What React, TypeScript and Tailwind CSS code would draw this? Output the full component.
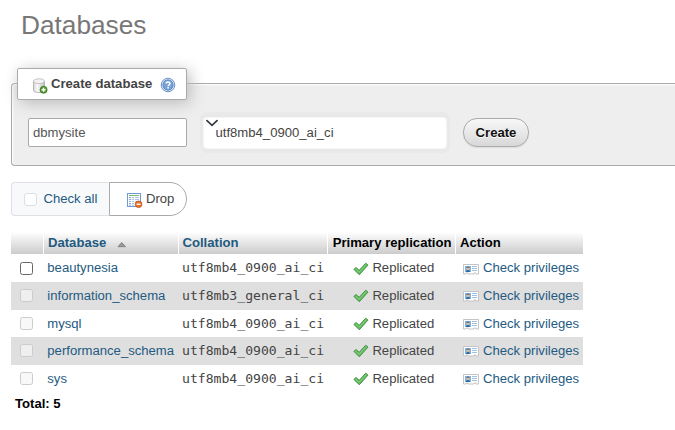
import React from "react";

type Row = { name: string; collation: string; enabled?: boolean; height: string; shade: string; box: string; icon: string };

const rows: Row[] = [
  { name: "beautynesia", collation: "utf8mb4_0900_ai_ci", enabled: true, height: "h-[28px]", shade: "bg-white", box: "mb-0", icon: "mt-[2px]" },
  { name: "information_schema", collation: "utf8mb3_general_ci", height: "h-[28px]", shade: "bg-[#dfdfdf]", box: "mb-[2px]", icon: "mt-0" },
  { name: "mysql", collation: "utf8mb4_0900_ai_ci", height: "h-[27px]", shade: "bg-white", box: "mb-0", icon: "mt-0" },
  { name: "performance_schema", collation: "utf8mb4_0900_ai_ci", height: "h-[28px]", shade: "bg-[#dfdfdf]", box: "mb-[2px]", icon: "mt-0" },
  { name: "sys", collation: "utf8mb4_0900_ai_ci", height: "h-[28px]", shade: "bg-white", box: "mb-[2px]", icon: "mt-0" },
];

const columns = "grid grid-cols-[32px_134px_148px_127px_127px] gap-x-px w-[572px]";
const headCell = "flex items-center bg-linear-to-b from-white to-[#cccccc]";

function DatabaseAddIcon() {
  return (
    <svg width="16" height="16" viewBox="0 0 16 16" className="shrink-0">
      <defs>
        <linearGradient id="cylinder">
          <stop offset="0" stopColor="#d4d4d4" />
          <stop offset=".35" stopColor="#fafafa" />
          <stop offset="1" stopColor="#bdbdbd" />
        </linearGradient>
      </defs>
      <path d="M1.5 3.2v9.2c0 1.3 2.2 2.1 5.5 2.1s5.5-.8 5.5-2.1V3.2z" fill="url(#cylinder)" stroke="#aaa" strokeWidth=".8" />
      <ellipse cx="7" cy="3.2" rx="5.5" ry="2.4" fill="#f3f3f3" stroke="#b8b8b8" strokeWidth=".8" />
      <circle cx="11.6" cy="11.8" r="3.5" fill="#58a032" stroke="#34731d" strokeWidth=".8" />
      <path d="M11.6 9.8v4M9.6 11.8h4" stroke="#fff" strokeWidth="1.4" />
    </svg>
  );
}

function HelpIcon() {
  return (
    <svg width="16" height="16" viewBox="0 0 16 16" className="shrink-0">
      <circle cx="8" cy="8" r="6.8" fill="#dce8f6" stroke="#6289be" strokeWidth=".9" />
      <circle cx="8" cy="8" r="5.2" fill="#77a1d8" stroke="#4d7dbc" strokeWidth=".7" />
      <path d="M6.1 6.6C6.1 4.4 10 4.4 10 6.5c0 1.3-1.9 1.3-1.9 2.7" fill="none" stroke="#fff" strokeWidth="1.5" />
      <rect x="7.3" y="10.1" width="1.6" height="1.5" fill="#fff" />
    </svg>
  );
}

function DropIcon() {
  return (
    <svg width="16" height="16" viewBox="0 0 16 16" className="shrink-0">
      <rect x=".5" y="1.5" width="13" height="13" fill="#f9fcff" stroke="#7098d1" />
      <path d="M2 3.5h10" stroke="#7cbd71" />
      <path d="M2 5.5h2M2 7.5h2M2 9.5h2M2 11.5h2M2 13.2h2" stroke="#7da3d6" strokeWidth=".9" />
      <path d="M5 5.5h2M8 5.5h4M5 7.5h2M8 7.5h4M5 9.5h2M8 9.5h4M5 11.5h2M5 13.2h2" stroke="#a9bdd9" strokeWidth=".9" />
      <circle cx="11.6" cy="12.3" r="3.3" fill="#ed7329" stroke="#b94611" strokeWidth=".7" />
      <path d="M9.7 12.3h3.8" stroke="#fff" strokeWidth="1.4" />
    </svg>
  );
}

function TickIcon() {
  return (
    <svg width="16" height="16" viewBox="0 0 16 16" className="shrink-0">
      <path d="M.9 8.4 3 6.5l3.2 2.8 6.5-7.1 2.3 1.9-8.7 9.7z" fill="#65bb60" stroke="#3c8c3d" strokeWidth=".9" strokeLinejoin="round" />
      <path d="m2.4 8 3.8 3.1 6.9-7.6" fill="none" stroke="#8dd585" strokeWidth=".8" />
    </svg>
  );
}

function PrivilegesIcon() {
  return (
    <svg width="16" height="16" viewBox="0 0 16 16" className="shrink-0">
      <path d="M.5 3.5h15v9.5H13v-1h-2v1H5v-1H3v1H.5z" fill="#fff" stroke="#c4c4c4" />
      <rect x="2" y="5" width="6" height="6" fill="#72b5f4" />
      <path d="M3 11c0-1.6 1-2 2-2s2 .4 2 2z" fill="#3d6795" />
      <circle cx="5" cy="7.6" r="1.5" fill="#efb784" />
      <path d="M3.4 7.1c0-2 3.2-2 3.2 0L5 6.6z" fill="#815532" />
      <path d="M9 5.5h5M9 7.5h5M9 9.5h5" stroke="#a2bfdd" />
    </svg>
  );
}

export default function App() {
  return (
    <main className="h-[430px] w-[675px] overflow-hidden bg-white font-['Liberation_Sans',Arial,sans-serif] text-[13.12px] leading-[20px] text-[#444]">
      <h1 className="h-[83px] pt-[9px] pl-[21px] text-[26.24px] leading-[32px] text-[#777]">Databases</h1>

      <section className="h-[83px] rounded-l-[4px] border border-r-0 border-[#aaa] bg-[#eee] pl-[5px] ml-[11px] shadow-[inset_1px_1px_2px_#fff]">
        <div className="-mt-[16px] flex h-[32px] w-[170px] items-center rounded-[2px] border border-[#aaa] bg-white pl-[14px] shadow-[3px_3px_15px_#bbb]">
          <span className="mt-[3px]"><DatabaseAddIcon /></span>
          <span className="ml-[3px] w-[107px] whitespace-nowrap font-bold">Create database</span>
          <span className="ml-[2px] mt-[2px]"><HelpIcon /></span>
        </div>
        <form className="flex pt-[12px] pl-[11px]" onSubmit={(e) => e.preventDefault()}>
          <input aria-label="Database name" defaultValue="dbmysite" className="mt-[6px] h-[29px] w-[159px] rounded-[2px] border border-[#aaa] bg-white px-[4px] text-[#555] outline-none" />
          <div className="ml-[13px] h-[41px] w-[250px] rounded-[7px] bg-[#e9e9e9] px-[3px] pt-[5px]">
            <div className="relative h-[32px] w-[244px] rounded-[4px] bg-white pt-[6px] pl-[12.5px] shadow-[inset_0_0_2px_#ddd]">
              <svg className="absolute top-[1px] left-[2px]" width="13" height="10" viewBox="0 0 13 10">
                <path d="m2 2.7 5 4.6 5-4.6" fill="none" stroke="#343a40" strokeWidth="1.7" strokeLinecap="round" />
              </svg>
              utf8mb4_0900_ai_ci
            </div>
          </div>
          <button className="mt-[6px] ml-[13px] h-[29px] w-[66px] rounded-[14px] border border-[#aaa] bg-linear-to-b from-[#f8f8f8] to-[#d8d8d8] font-bold text-[#111] shadow-[0_1px_1px_#ddd] [text-shadow:0_1px_0_#fff]">Create</button>
        </form>
      </section>

      <div className="mt-[16px] ml-[11px] flex h-[34px]">
        <label className="flex w-[98px] items-center rounded-l-[4px] border border-r-0 border-[#dee2e6] bg-[#f8f9fa] pl-[12px] text-[#235a81]">
          <input type="checkbox" disabled className="mr-[6.5px] h-[13px] w-[13px] appearance-none rounded-[3px] border border-[#dce0e4] bg-white" />
          Check all
        </label>
        <button className="flex w-[78px] items-center rounded-r-[17px] border border-[#aaa] bg-white pl-[17px]">
          <span className="mt-[2px]"><DropIcon /></span><span className="ml-[3px]">Drop</span>
        </button>
      </div>

      <div className="mt-[16px] ml-[11px] w-[572px]">
        <div className={`${columns} h-[22px] font-bold text-black`}>
          <div className={headCell} />
          <div className={`${headCell} pl-[4px] text-[#235a81]`}>
            Database
            <svg className="mt-[3px] ml-[11px]" width="10" height="7" viewBox="0 0 10 7"><path d="M1 5.7 4.7 1.5l3.8 4.2z" fill="#999" stroke="#777" strokeWidth=".8" /></svg>
          </div>
          <div className={`${headCell} pl-[3.5px] text-[#235a81]`}>Collation</div>
          <div className={`${headCell} pl-[4.7px] whitespace-nowrap`}>Primary replication</div>
          <div className={`${headCell} pl-[4px]`}>Action</div>
        </div>
        {rows.map((row) => (
          <div key={row.name} className={`${columns} ${row.height} ${row.shade} items-center`}>
            <input type="checkbox" aria-label={row.name} disabled={!row.enabled} className={`ml-[9px] h-[13px] w-[13px] appearance-none rounded-[2.5px] border ${row.box} ${row.enabled ? "border-[#666] bg-white" : "border-[#ccc] bg-[#f5f5f5]/70"}`} />
            <a className="pl-[3.3px] whitespace-nowrap text-[#235a81]">{row.name}</a>
            <span className="pl-[3px] whitespace-nowrap font-['DejaVu_Sans_Mono',monospace]">{row.collation}</span>
            <span className="flex items-center pl-[25px]"><span className={row.icon}><TickIcon /></span><span className="ml-[3.4px]">Replicated</span></span>
            <a className="flex items-center pl-[7px] text-[#235a81]"><span className={row.icon}><PrivilegesIcon /></span><span className="ml-[4px] whitespace-nowrap">Check privileges</span></a>
          </div>
        ))}
        <div className="mt-px pl-[4px] font-bold text-black">Total: 5</div>
      </div>
    </main>
  );
}
